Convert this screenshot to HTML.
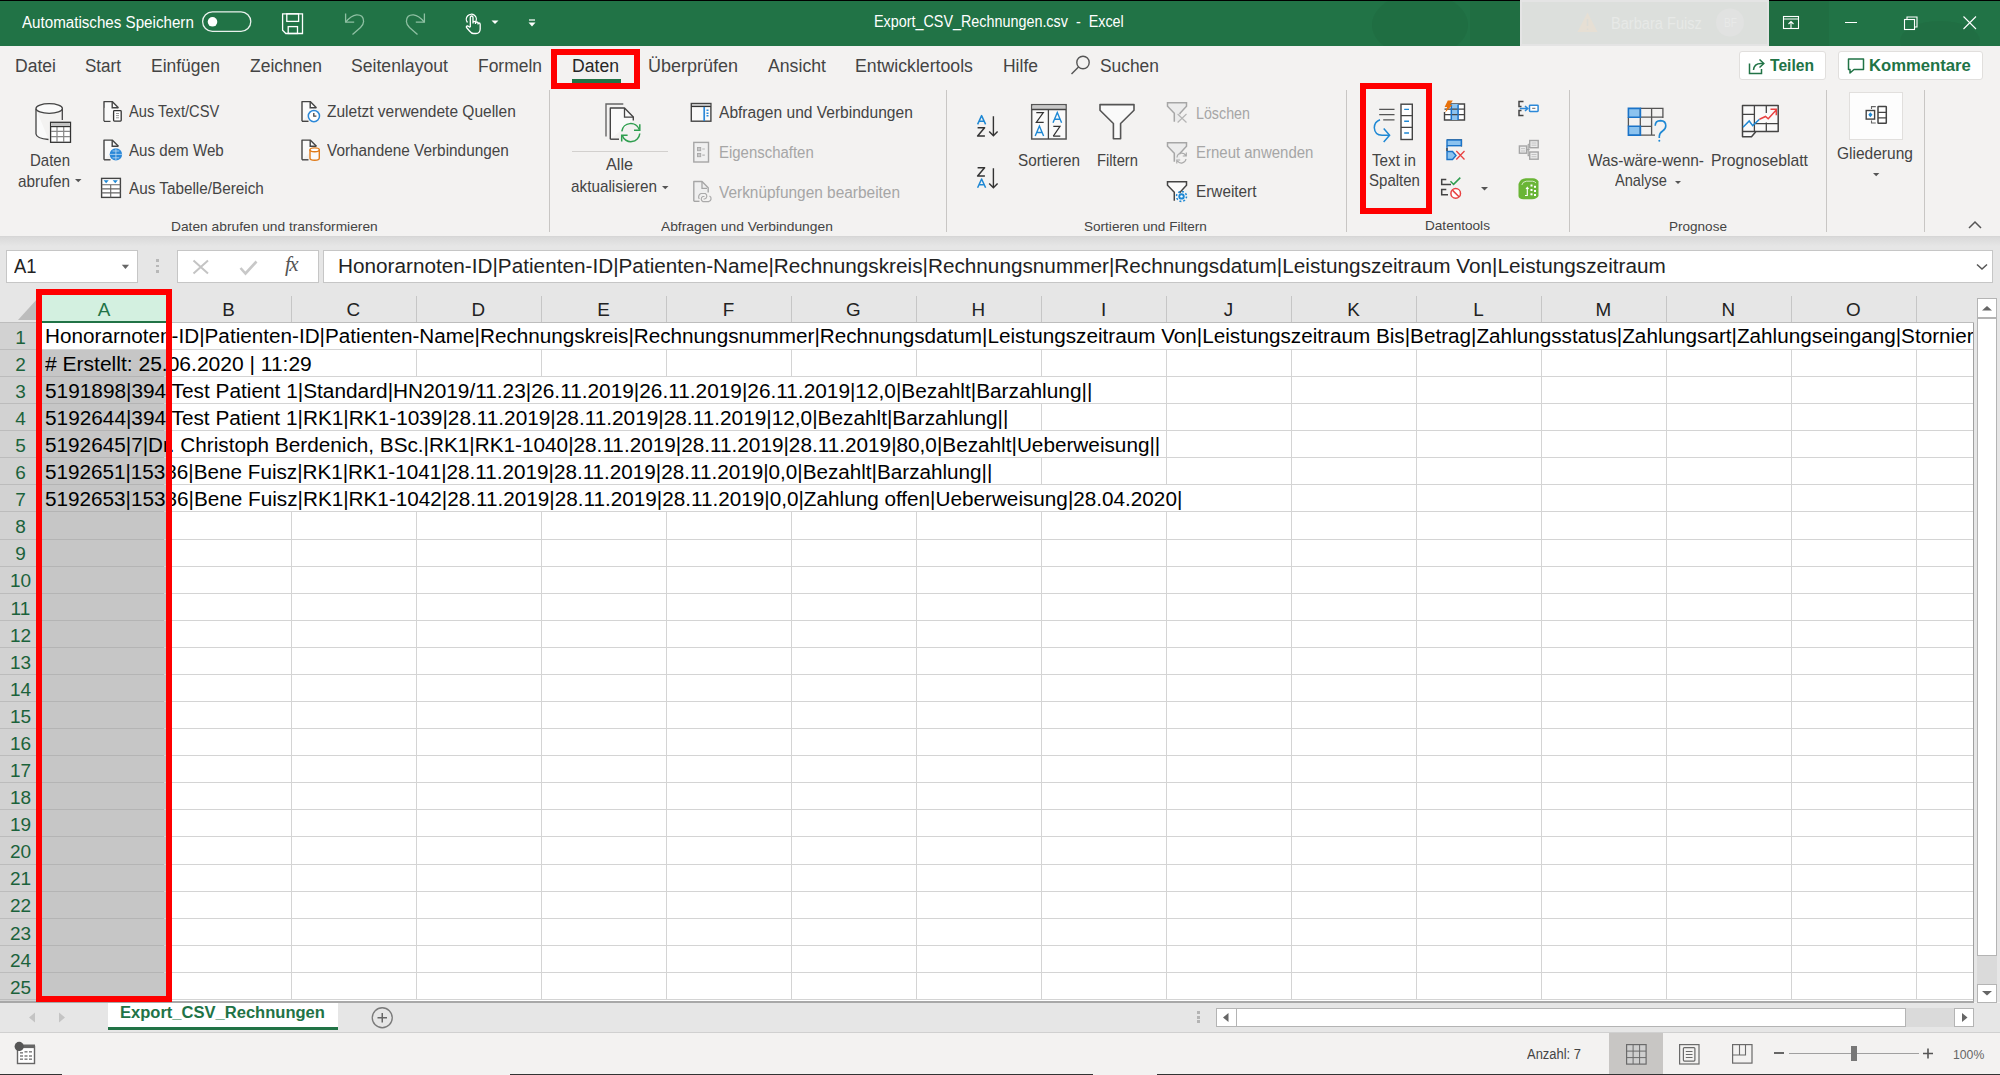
<!DOCTYPE html><html><head><meta charset="utf-8"><style>
html,body{margin:0;padding:0;width:2000px;height:1075px;overflow:hidden;background:#f3f2f1;font-family:"Liberation Sans",sans-serif}
.t{position:absolute;white-space:pre;}
</style></head><body>
<div style="position:absolute;left:0px;top:0px;width:2000px;height:1px;background:#000"></div>
<div style="position:absolute;left:0px;top:1px;width:2000px;height:45px;background:#217346"></div>
<div class="t" style="left:22px;top:14.76px;font-size:15.642px;line-height:15.642px;color:#fff;transform:scaleX(0.9697);transform-origin:0 13.24px;">Automatisches Speichern</div>
<div class="t" style="left:874px;top:14.26px;font-size:15.642px;line-height:15.642px;color:#fff;transform:scaleX(0.9187);transform-origin:0 13.24px;">Export_CSV_Rechnungen.csv  -  Excel</div>
<div style="position:absolute;left:0px;top:46px;width:2000px;height:190px;background:#f3f2f1"></div>
<div class="t" style="left:15px;top:56.63px;font-size:18.156px;line-height:18.156px;color:#444;transform:scaleX(0.9673);transform-origin:0 15.37px;">Datei</div>
<div class="t" style="left:85px;top:56.63px;font-size:18.156px;line-height:18.156px;color:#444;transform:scaleX(0.9389);transform-origin:0 15.37px;">Start</div>
<div class="t" style="left:151px;top:56.63px;font-size:18.156px;line-height:18.156px;color:#444;transform:scaleX(0.9627);transform-origin:0 15.37px;">Einfügen</div>
<div class="t" style="left:250px;top:56.63px;font-size:18.156px;line-height:18.156px;color:#444;transform:scaleX(0.9640);transform-origin:0 15.37px;">Zeichnen</div>
<div class="t" style="left:351px;top:56.63px;font-size:18.156px;line-height:18.156px;color:#444;transform:scaleX(0.9707);transform-origin:0 15.37px;">Seitenlayout</div>
<div class="t" style="left:478px;top:56.63px;font-size:18.156px;line-height:18.156px;color:#444;transform:scaleX(0.9612);transform-origin:0 15.37px;">Formeln</div>
<div class="t" style="left:572px;top:56.63px;font-size:18.156px;line-height:18.156px;color:#262626;transform:scaleX(0.9701);transform-origin:0 15.37px;">Daten</div>
<div class="t" style="left:648px;top:56.63px;font-size:18.156px;line-height:18.156px;color:#444;transform:scaleX(0.9909);transform-origin:0 15.37px;">Überprüfen</div>
<div class="t" style="left:768px;top:56.63px;font-size:18.156px;line-height:18.156px;color:#444;transform:scaleX(0.9742);transform-origin:0 15.37px;">Ansicht</div>
<div class="t" style="left:855px;top:56.63px;font-size:18.156px;line-height:18.156px;color:#444;transform:scaleX(0.9746);transform-origin:0 15.37px;">Entwicklertools</div>
<div class="t" style="left:1003px;top:56.63px;font-size:18.156px;line-height:18.156px;color:#444;transform:scaleX(0.9636);transform-origin:0 15.37px;">Hilfe</div>
<div class="t" style="left:1100px;top:56.63px;font-size:18.156px;line-height:18.156px;color:#444;transform:scaleX(0.9582);transform-origin:0 15.37px;">Suchen</div>
<div style="position:absolute;left:572px;top:79px;width:49px;height:4px;background:#217346"></div>
<div class="t" style="left:30px;top:151.99px;font-size:16.201px;line-height:16.201px;color:#444;transform:scaleX(0.9253);transform-origin:0 13.71px;">Daten</div>
<div class="t" style="left:18px;top:172.69px;font-size:16.201px;line-height:16.201px;color:#444;transform:scaleX(0.9465);transform-origin:0 13.71px;">abrufen</div>
<div class="t" style="left:129.4px;top:104.34px;font-size:15.782px;line-height:15.782px;color:#444;transform:scaleX(0.9302);transform-origin:0 13.36px;">Aus Text/CSV</div>
<div class="t" style="left:129.4px;top:142.84px;font-size:15.782px;line-height:15.782px;color:#444;transform:scaleX(0.9593);transform-origin:0 13.36px;">Aus dem Web</div>
<div class="t" style="left:129.4px;top:181.04px;font-size:15.782px;line-height:15.782px;color:#444;transform:scaleX(0.9699);transform-origin:0 13.36px;">Aus Tabelle/Bereich</div>
<div class="t" style="left:327px;top:104.34px;font-size:15.782px;line-height:15.782px;color:#444;transform:scaleX(0.9838);transform-origin:0 13.36px;">Zuletzt verwendete Quellen</div>
<div class="t" style="left:327px;top:142.84px;font-size:15.782px;line-height:15.782px;color:#444;transform:scaleX(0.9737);transform-origin:0 13.36px;">Vorhandene Verbindungen</div>
<div class="t" style="left:171px;top:219.65px;font-size:13.408px;line-height:13.408px;color:#444;transform:scaleX(1.0287);transform-origin:0 11.35px;">Daten abrufen und transformieren</div>
<div class="t" style="left:606px;top:156.29px;font-size:16.201px;line-height:16.201px;color:#444;">Alle</div>
<div class="t" style="left:571px;top:178.29px;font-size:16.201px;line-height:16.201px;color:#444;transform:scaleX(0.9456);transform-origin:0 13.71px;">aktualisieren</div>
<div class="t" style="left:719.4px;top:105.36px;font-size:15.642px;line-height:15.642px;color:#444;transform:scaleX(0.9958);transform-origin:0 13.24px;">Abfragen und Verbindungen</div>
<div class="t" style="left:719.4px;top:144.76px;font-size:15.642px;line-height:15.642px;color:#a6a6a6;transform:scaleX(0.9563);transform-origin:0 13.24px;">Eigenschaften</div>
<div class="t" style="left:719.4px;top:184.76px;font-size:15.642px;line-height:15.642px;color:#a6a6a6;transform:scaleX(0.9875);transform-origin:0 13.24px;">Verknüpfungen bearbeiten</div>
<div class="t" style="left:661px;top:219.65px;font-size:13.408px;line-height:13.408px;color:#444;transform:scaleX(1.0301);transform-origin:0 11.35px;">Abfragen und Verbindungen</div>
<div class="t" style="left:1018px;top:151.79px;font-size:16.201px;line-height:16.201px;color:#444;transform:scaleX(0.9432);transform-origin:0 13.71px;">Sortieren</div>
<div class="t" style="left:1097px;top:151.79px;font-size:16.201px;line-height:16.201px;color:#444;transform:scaleX(0.9109);transform-origin:0 13.71px;">Filtern</div>
<div class="t" style="left:1195.5px;top:105.76px;font-size:15.642px;line-height:15.642px;color:#a6a6a6;transform:scaleX(0.9132);transform-origin:0 13.24px;">Löschen</div>
<div class="t" style="left:1195.5px;top:145.26px;font-size:15.642px;line-height:15.642px;color:#a6a6a6;transform:scaleX(0.9583);transform-origin:0 13.24px;">Erneut anwenden</div>
<div class="t" style="left:1195.5px;top:184.46px;font-size:15.642px;line-height:15.642px;color:#444;transform:scaleX(0.9804);transform-origin:0 13.24px;">Erweitert</div>
<div class="t" style="left:1084px;top:219.65px;font-size:13.408px;line-height:13.408px;color:#444;transform:scaleX(1.0126);transform-origin:0 11.35px;">Sortieren und Filtern</div>
<div class="t" style="left:1372px;top:151.89px;font-size:16.201px;line-height:16.201px;color:#444;transform:scaleX(0.9397);transform-origin:0 13.71px;">Text in</div>
<div class="t" style="left:1369px;top:172.29px;font-size:16.201px;line-height:16.201px;color:#444;transform:scaleX(0.9282);transform-origin:0 13.71px;">Spalten</div>
<div class="t" style="left:1425px;top:219.15px;font-size:13.408px;line-height:13.408px;color:#444;transform:scaleX(1.0141);transform-origin:0 11.35px;">Datentools</div>
<div class="t" style="left:1588px;top:152.29px;font-size:16.201px;line-height:16.201px;color:#444;transform:scaleX(0.9522);transform-origin:0 13.71px;">Was-wäre-wenn-</div>
<div class="t" style="left:1615px;top:172.29px;font-size:16.201px;line-height:16.201px;color:#444;transform:scaleX(0.9022);transform-origin:0 13.71px;">Analyse</div>
<div class="t" style="left:1711px;top:152.29px;font-size:16.201px;line-height:16.201px;color:#444;transform:scaleX(0.9703);transform-origin:0 13.71px;">Prognoseblatt</div>
<div class="t" style="left:1669px;top:219.65px;font-size:13.408px;line-height:13.408px;color:#444;transform:scaleX(1.0106);transform-origin:0 11.35px;">Prognose</div>
<div class="t" style="left:1837px;top:145.29px;font-size:16.201px;line-height:16.201px;color:#444;transform:scaleX(0.9590);transform-origin:0 13.71px;">Gliederung</div>
<div style="position:absolute;left:1739px;top:51px;width:87px;height:29px;background:#fff;border:1px solid #e1dfdd;border-radius:3px;box-sizing:border-box"></div>
<div style="position:absolute;left:1838px;top:51px;width:145px;height:29px;background:#fff;border:1px solid #e1dfdd;border-radius:3px;box-sizing:border-box"></div>
<div class="t" style="left:1770px;top:57.46px;font-size:17.179px;line-height:17.179px;color:#217346;font-weight:bold;transform:scaleX(0.9098);transform-origin:0 14.54px;">Teilen</div>
<div class="t" style="left:1869px;top:57.46px;font-size:17.179px;line-height:17.179px;color:#217346;font-weight:bold;transform:scaleX(0.9714);transform-origin:0 14.54px;">Kommentare</div>
<div style="position:absolute;left:549px;top:90px;width:1px;height:142px;background:#c8c6c4"></div>
<div style="position:absolute;left:946px;top:90px;width:1px;height:142px;background:#c8c6c4"></div>
<div style="position:absolute;left:1346px;top:90px;width:1px;height:142px;background:#c8c6c4"></div>
<div style="position:absolute;left:1569px;top:90px;width:1px;height:142px;background:#c8c6c4"></div>
<div style="position:absolute;left:1826px;top:90px;width:1px;height:142px;background:#c8c6c4"></div>
<div style="position:absolute;left:1924px;top:90px;width:1px;height:142px;background:#c8c6c4"></div>
<div style="position:absolute;left:572px;top:151px;width:96px;height:1px;background:#d2d0ce"></div>
<div style="position:absolute;left:1849px;top:92px;width:54px;height:48px;background:#fdfdfd;border:1px solid #e1dfdd;box-sizing:border-box"></div>
<svg style="position:absolute;left:30px;top:98px" width="50" height="50" viewBox="0 0 50 50"><g fill="#fafafa" stroke="#444" stroke-width="1.3">
<path d="M6 10.7V36Q6.5 40.5 18.5 41.5"/>
<path d="M32.3 10.7V22" fill="none"/>
<ellipse cx="19.2" cy="10.5" rx="13.2" ry="4.8"/></g>
<rect x="20.6" y="24.3" width="19.9" height="20" fill="#fff" stroke="#333" stroke-width="1.3"/>
<rect x="21.3" y="25" width="18.5" height="3.5" fill="#c3c3c3"/>
<g stroke="#888" stroke-width="1.2"><path d="M27 28.5V44M33.7 28.5V44M21 33.3H40M21 38.6H40"/></g>
<path d="M21 28.6H40" stroke="#333" stroke-width="1.2"/></svg>
<svg style="position:absolute;left:98px;top:98px" width="30" height="30" viewBox="0 0 30 30"><path d="M6 23.3V3.6H14.2L20.4 9.8" fill="#fafafa" stroke="#444" stroke-width="1.4" stroke-linejoin="round"/><path d="M14.2 3.6V9.8H20.4" fill="none" stroke="#444" stroke-width="1.4"/><path d="M6 23.3H12.5" stroke="#444" stroke-width="1.4"/><path d="M6.7 9.8V22.6H15" fill="#fafafa" stroke="none"/><rect x="15.6" y="12.6" width="7.6" height="10.5" rx="0.8" fill="#fff" stroke="#333" stroke-width="1.3"/><path d="M18 15.5H21M18 17.6H21M18 19.8H21" stroke="#999" stroke-width="1"/></svg>
<svg style="position:absolute;left:98px;top:136px" width="30" height="30" viewBox="0 0 30 30"><path d="M6 23.8V4.1H14.2L20.4 10.3" fill="#fafafa" stroke="#444" stroke-width="1.4" stroke-linejoin="round"/><path d="M14.2 4.1V10.3H20.4" fill="none" stroke="#444" stroke-width="1.4"/><path d="M6 23.8H12.5" stroke="#444" stroke-width="1.4"/><circle cx="17.9" cy="18.4" r="6.2" fill="#2b88d8"/><path d="M12 18.4H24M17.9 12.5V24.3M14.5 15H21.3M14.5 21.8H21.3" stroke="#fff" stroke-width="0.8" opacity="0.7"/></svg>
<svg style="position:absolute;left:98px;top:174px" width="30" height="30" viewBox="0 0 30 30"><rect x="3.6" y="4.4" width="18.8" height="19" fill="#fff" stroke="#444" stroke-width="1.4"/><path d="M5.6 6.3H10.7L8.15 9.2ZM14.7 6.3H19.8L17.25 9.2Z" fill="#1e88d4"/><path d="M3.6 10.8H22.4M3.6 14.9H22.4M3.6 18.9H22.4M12.7 10.8V23.4" stroke="#666" stroke-width="1.1"/></svg>
<svg style="position:absolute;left:296px;top:98px" width="30" height="30" viewBox="0 0 30 30"><path d="M6 23.3V3.6H14.2L20.4 9.8" fill="#fafafa" stroke="#444" stroke-width="1.4" stroke-linejoin="round"/><path d="M14.2 3.6V9.8H20.4" fill="none" stroke="#444" stroke-width="1.4"/><path d="M6 23.3H12.5" stroke="#444" stroke-width="1.4"/><circle cx="17.9" cy="18.1" r="5.6" fill="#fff" stroke="#2b88d8" stroke-width="1.5"/><path d="M17.8 15V18.1H20.4" fill="none" stroke="#444" stroke-width="1.3"/></svg>
<svg style="position:absolute;left:296px;top:136px" width="30" height="30" viewBox="0 0 30 30"><path d="M6 23.8V4.1H14.2L20.4 10.3" fill="#fafafa" stroke="#444" stroke-width="1.4" stroke-linejoin="round"/><path d="M14.2 4.1V10.3H20.4" fill="none" stroke="#444" stroke-width="1.4"/><path d="M6 23.8H12.5" stroke="#444" stroke-width="1.4"/><path d="M14 13.5V22.2Q14 24.2 18.7 24.2Q23.3 24.2 23.3 22.2V13.5" fill="#fafafa" stroke="#e07b1a" stroke-width="1.4"/><ellipse cx="18.65" cy="13.8" rx="4.65" ry="1.9" fill="#fff" stroke="#e07b1a" stroke-width="1.4"/></svg>
<svg style="position:absolute;left:598px;top:98px" width="50" height="50" viewBox="0 0 50 50"><path d="M8 38.6V6H25.3" fill="none" stroke="#666" stroke-width="1.4"/>
<path d="M12.3 41.2V10H26.5L35.3 19V22.6" fill="#fafafa" stroke="#444" stroke-width="1.4" stroke-linejoin="round"/>
<path d="M26.5 10V19.2H35.3" fill="none" stroke="#444" stroke-width="1.3"/>
<path d="M12.3 41.2H21" stroke="#444" stroke-width="1.4"/>
<path d="M23.8 33.3A9 9 0 0 1 41.2 31.6" fill="none" stroke="#2f9e4f" stroke-width="1.5"/>
<path d="M41.8 26.3V32.2H36" fill="none" stroke="#2f9e4f" stroke-width="1.5"/>
<path d="M41.8 35.5A9 9 0 0 1 24.3 37.5" fill="none" stroke="#2f9e4f" stroke-width="1.5"/>
<path d="M23.7 43.5V37.3H29.6" fill="none" stroke="#2f9e4f" stroke-width="1.5"/></svg>
<svg style="position:absolute;left:685px;top:98px" width="30" height="30" viewBox="0 0 30 30"><rect x="6.3" y="5.5" width="19.6" height="17.7" fill="#fafafa" stroke="#444" stroke-width="1.4"/><rect x="7" y="6.2" width="18.2" height="2.4" fill="#c4c4c4"/><path d="M6.3 8.5H25.9" stroke="#333" stroke-width="1.2"/><path d="M19.2 8.9V23" stroke="#2b88d8" stroke-width="1.7"/><path d="M21.5 12.3H23.5M21.5 15.3H23.5M21.5 17.8H23.5" stroke="#2b88d8" stroke-width="1.4"/></svg>
<svg style="position:absolute;left:688px;top:138px" width="30" height="30" viewBox="0 0 30 30"><rect x="5.8" y="4.4" width="14.7" height="19.6" fill="#f0f0f0" stroke="#a6a6a6" stroke-width="1.4"/><rect x="9.5" y="9.5" width="3.2" height="3.2" fill="#c8c8c8" stroke="#a8a8a8" stroke-width="0.9"/><rect x="9.5" y="15.5" width="3.2" height="3.2" fill="#c8c8c8" stroke="#a8a8a8" stroke-width="0.9"/><path d="M14.3 11H16.8M14.3 17.2H16.8" stroke="#b5b5b5" stroke-width="1.2"/></svg>
<svg style="position:absolute;left:688px;top:176px" width="30" height="30" viewBox="0 0 30 30"><path d="M5.8 25.3V5.5H14L20.2 11.8V16.5" fill="#efefef" stroke="#a6a6a6" stroke-width="1.4" stroke-linejoin="round"/><path d="M14 5.5V12.3H19" fill="none" stroke="#a6a6a6" stroke-width="1.3"/><path d="M5.8 25.3H11.5" stroke="#a6a6a6" stroke-width="1.4"/><path d="M11.3 23A3.6 3.6 0 0 1 13 17.5H17.3A3 3 0 0 1 16.6 23H15.5M16.5 20.5H14.8A2.8 2.8 0 0 0 15 25.6H20.6A3 3 0 0 0 21.5 20" fill="none" stroke="#aaa" stroke-width="1.2"/></svg>
<svg style="position:absolute;left:74px;top:178px" width="8.5" height="5.25" viewBox="0 0 8.5 5.25"><path d="M1 1H7.5L4.25 4.25Z" fill="#555"/></svg>
<svg style="position:absolute;left:660.5px;top:185px" width="8.5" height="5.25" viewBox="0 0 8.5 5.25"><path d="M1 1H7.5L4.25 4.25Z" fill="#555"/></svg>
<svg style="position:absolute;left:1673.5px;top:180px" width="8.0" height="5.0" viewBox="0 0 8.0 5.0"><path d="M1 1H7.0L4.0 4.0Z" fill="#555"/></svg>
<svg style="position:absolute;left:1871.8px;top:172px" width="8.400000000000091" height="5.2000000000000455" viewBox="0 0 8.400000000000091 5.2000000000000455"><path d="M1 1H7.400000000000091L4.2000000000000455 4.2000000000000455Z" fill="#555"/></svg>
<svg style="position:absolute;left:1480px;top:186.2px" width="9" height="5.5" viewBox="0 0 9 5.5"><path d="M1 1H8L4.5 4.5Z" fill="#555"/></svg>
<svg style="position:absolute;left:970px;top:110px" width="35" height="35" viewBox="0 0 35 35"><path d="M7.6 14.4L11.6 5.6L15.6 14.4M9 11.3H14.2" fill="none" stroke="#1e88d4" stroke-width="1.5" stroke-linejoin="round"/><path d="M7.6 17.7H14.6L7.6 25.9H14.9" fill="none" stroke="#333" stroke-width="1.5" stroke-linejoin="round"/><path d="M23.4 6.2V25.6M19.2 21.4L23.4 25.8L27.6 21.4" fill="none" stroke="#333" stroke-width="1.4"/></svg>
<svg style="position:absolute;left:970px;top:162px" width="35" height="35" viewBox="0 0 35 35"><path d="M7.6 5.7H14.6L7.6 13.9H14.9" fill="none" stroke="#333" stroke-width="1.5" stroke-linejoin="round"/><path d="M7.6 25.8L11.6 17L15.6 25.8M9 22.7H14.2" fill="none" stroke="#1e88d4" stroke-width="1.5" stroke-linejoin="round"/><path d="M23.4 6.2V25.6M19.2 21.4L23.4 25.8L27.6 21.4" fill="none" stroke="#333" stroke-width="1.4"/></svg>
<svg style="position:absolute;left:1025px;top:98px" width="50" height="50" viewBox="0 0 50 50"><rect x="6.7" y="6.7" width="34.4" height="34.3" fill="#fafafa" stroke="#555" stroke-width="1.5"/>
<rect x="7.5" y="7.4" width="32.8" height="3.8" fill="#c8c8c8"/><path d="M6.7 11.5H41.1M23.4 11.5V41" stroke="#444" stroke-width="1.3"/>
<path d="M11.3 14.7H18.3L11.3 24.4H18.7M28.3 38.1H35.3" fill="none" stroke="#333" stroke-width="1.2"/>
<path d="M28.3 28.3H35L28.3 38.1" fill="none" stroke="#333" stroke-width="1.2"/>
<path d="M10.2 38.1L14.4 28L18.6 38.1M11.6 34.5H17.2M28 24.8L32.3 14.6L36.6 24.8M29.4 21.2H35.2" fill="none" stroke="#1e88d4" stroke-width="1.4"/></svg>
<svg style="position:absolute;left:1094px;top:98px" width="50" height="50" viewBox="0 0 50 50"><path d="M6 6.6H40V12.2L26.6 25.5V40.8H19.4V25.5L6 12.2Z" fill="#fafafa" stroke="#555" stroke-width="1.6" stroke-linejoin="round"/></svg>
<svg style="position:absolute;left:1166px;top:101px" width="24" height="24" viewBox="0 0 24 24"><path d="M1.5 1.8H20.5V5.3L14.0 12.3V20.3H8.3V12.3L1.5 5.3Z" fill="#ececec" stroke="none"/><path d="M14.0 13.3V12.3L20.5 5.3V1.8H1.5V5.3L8.3 12.3V20.8" fill="none" stroke="#a6a6a6" stroke-width="1.5" stroke-linejoin="miter"/><path d="M11.6 13L20.5 21.5M20.5 13L11.6 21.5" stroke="#b5b5b5" stroke-width="1.2"/></svg>
<svg style="position:absolute;left:1166px;top:141px" width="24" height="24" viewBox="0 0 24 24"><path d="M1.5 1.8H20.5V5.3L14.0 12.3V20.3H8.3V12.3L1.5 5.3Z" fill="#ececec" stroke="none"/><path d="M14.0 13.3V12.3L20.5 5.3V1.8H1.5V5.3L8.3 12.3V20.8" fill="none" stroke="#a6a6a6" stroke-width="1.5" stroke-linejoin="miter"/><path d="M11 16.5A4.7 4.7 0 0 1 19.8 14.6M20.3 11.5V15H16.8M20 18A4.7 4.7 0 0 1 11.5 20M10.8 22.5V19H14.2" fill="none" stroke="#aaa" stroke-width="1.2"/></svg>
<svg style="position:absolute;left:1166px;top:180px" width="24" height="24" viewBox="0 0 24 24"><path d="M1.5 1.8H20.5V5.3L14.0 12.3V20.3H8.3V12.3L1.5 5.3Z" fill="#fafafa" stroke="none"/><path d="M14.0 13.3V12.3L20.5 5.3V1.8H1.5V5.3L8.3 12.3V20.8" fill="none" stroke="#444" stroke-width="1.5" stroke-linejoin="miter"/><circle cx="15.5" cy="16.4" r="3.2" fill="#1e88d4"/><circle cx="15.5" cy="16.4" r="5" fill="none" stroke="#1e88d4" stroke-width="1.5" stroke-dasharray="2 1.9"/><circle cx="15.5" cy="16.4" r="1.2" fill="#fff"/></svg>
<svg style="position:absolute;left:1368px;top:98px" width="50" height="50" viewBox="0 0 50 50"><path d="M11.2 11.4H26.5M11.2 16.6H26.5M15.2 21.9H26.5" stroke="#555" stroke-width="1.4"/>
<rect x="33" y="6.2" width="11.3" height="35.3" fill="#fff" stroke="#444" stroke-width="1.4"/>
<path d="M33 17.7H44.3M33 29.4H44.3" stroke="#444" stroke-width="1.3"/>
<path d="M36.2 11.4H41M36.2 23.2H41M36.2 35H41" stroke="#1e88d4" stroke-width="1.4"/>
<path d="M12 21.8Q6.3 24 6.3 29.8Q6.8 37.2 14 37.3H21" fill="none" stroke="#1e88d4" stroke-width="1.5"/>
<path d="M15.7 30.6L21.6 37.3L15.7 44" fill="none" stroke="#1e88d4" stroke-width="1.5"/></svg>
<svg style="position:absolute;left:1440px;top:98px" width="30" height="28" viewBox="0 0 30 28"><path d="M9 6H24.5V22H4.5V14" fill="#fff" stroke="#444" stroke-width="1.4"/><rect x="11.3" y="6" width="6.8" height="16" fill="#8cc3ef"/><path d="M4.5 11.2H24.5M4.5 16.6H24.5" stroke="#444" stroke-width="1.3"/><path d="M11.3 6.5V22M18.1 6.5V22" stroke="#1a73c8" stroke-width="1.5"/><path d="M18.1 6V22" stroke="#444" stroke-width="0"/><path d="M7.8 2.6H12.8L9.9 7H12.4L5.2 14.6L7.1 9H4.6Z" fill="#e8720c"/></svg>
<svg style="position:absolute;left:1440px;top:136px" width="30" height="28" viewBox="0 0 30 28"><path d="M7 4H21.5V10.5" fill="none" stroke="#444" stroke-width="1.3"/><rect x="7" y="4" width="14.3" height="5.7" fill="#8cc3ef" stroke="#1a73c8" stroke-width="1.4"/><path d="M7 9.7V23.5H12.5L16 19.5L12.5 15.5H7" fill="#8cc3ef" stroke="#1a73c8" stroke-width="1.4"/><path d="M7 12V15" stroke="#444" stroke-width="1.3"/><path d="M16.3 15L24.5 23.5M24.5 15L16.3 23.5" stroke="#e84141" stroke-width="1.3"/></svg>
<svg style="position:absolute;left:1436px;top:175px" width="30" height="28" viewBox="0 0 30 28"><path d="M10.3 4.6H5.7V9.6H15M10.3 14.6H5.7V19.8H12" fill="none" stroke="#444" stroke-width="1.5"/><path d="M14.5 6.2L17.6 9.4L24.3 2.6" fill="none" stroke="#2f9e4f" stroke-width="1.5"/><circle cx="19.7" cy="18.4" r="4.8" fill="#fff" stroke="#e84141" stroke-width="1.5"/><path d="M16.4 15.1L23 21.7" stroke="#e84141" stroke-width="1.5"/></svg>
<svg style="position:absolute;left:1514px;top:98px" width="30" height="26" viewBox="0 0 30 26"><path d="M9.5 3.5H5V8.5H7.5M7.5 12.5H5V17.5H9.5" fill="none" stroke="#444" stroke-width="1.5"/><path d="M5.8 10.5H13.5M11 8L13.8 10.5L11 13" fill="none" stroke="#2b88d8" stroke-width="1.5"/><rect x="15.5" y="7.2" width="8.6" height="6.2" rx="0.6" fill="#fff" stroke="#2b88d8" stroke-width="1.5"/><path d="M18.2 10.3H21.4" stroke="#666" stroke-width="1"/></svg>
<svg style="position:absolute;left:1514px;top:136px" width="30" height="28" viewBox="0 0 30 28"><g fill="#ececec" stroke="#a6a6a6" stroke-width="1.4"><rect x="5.4" y="10" width="7.2" height="7.2"/><rect x="15.7" y="4.5" width="8.5" height="7.2"/><rect x="15.7" y="16" width="8.5" height="7.2"/></g><path d="M12.6 13.6H15.7M14.2 8.3V19.6H15.7M14.2 8.3H15.7" fill="none" stroke="#a6a6a6" stroke-width="1.2"/><path d="M7 12.6H11M7 15H11M17.5 7H22.5M17.5 9.2H22.5M17.5 18.5H22.5M17.5 20.7H22.5" stroke="#c0c0c0" stroke-width="0.9"/></svg>
<svg style="position:absolute;left:1514px;top:175px" width="30" height="28" viewBox="0 0 30 28"><path d="M4.5 9Q6 3.5 12 3.2H19Q23 3.6 24.5 6.5V21Q23 24 18 24.3H9.5Q4.5 24 4.5 21Z" fill="#6ab536"/><path d="M7.8 10Q8.5 6.5 12.5 6.2H18.5Q21 6.5 22 8" fill="none" stroke="#fff" stroke-width="0.9" opacity="0.8"/><path d="M11 20.5H13.3V12.5M12 14L13.3 12.3L14.6 14" fill="none" stroke="#fff" stroke-width="1.1"/><g fill="#fff"><rect x="16.5" y="9.5" width="2" height="2"/><rect x="20" y="10.8" width="2" height="2"/><rect x="16.5" y="14" width="2" height="2"/><rect x="20" y="15" width="2" height="2"/><rect x="16.5" y="18.3" width="2" height="2"/><rect x="20" y="19" width="2" height="2"/></g></svg>
<svg style="position:absolute;left:1620px;top:98px" width="50" height="50" viewBox="0 0 50 50"><rect x="8.4" y="10.4" width="12" height="8.8" fill="#8cc3ef"/><rect x="8.4" y="28.3" width="12" height="8.8" fill="#8cc3ef"/>
<path d="M20.3 10.4H42.9V20M20.3 19.2H42.9M20.3 28.3H31.6M20.3 37.1H35M31.6 10.4V37.1M20.3 10.4V37.1M8.4 19.2V28.3" fill="none" stroke="#555" stroke-width="1.3"/>
<path d="M20.4 10.4V19.3H8.4V10.4ZM20.4 28.3V37.1H8.4V28.3Z" fill="none" stroke="#1a73c8" stroke-width="1.6"/>
<rect x="8.4" y="10.4" width="0.1" height="0.1" fill="none"/>
<path d="M35.2 27.8Q35.2 22.6 40.5 22.6Q45.8 22.8 45.8 27.8Q45.8 31 42.6 33Q39.3 35.2 39.3 38.5V40" fill="none" stroke="#1e88d4" stroke-width="1.6"/><circle cx="39.3" cy="42.8" r="1" fill="#1e88d4"/></svg>
<svg style="position:absolute;left:1700px;top:98px" width="82" height="50" viewBox="0 0 82 50"><path d="M42.5 7.4H78.2V33.5H56L51.5 38.8H42.5Z" fill="#fafafa" stroke="#444" stroke-width="1.5" stroke-linejoin="round"/>
<path d="M54.4 7.4V33.5M66.3 7.4V15M66.3 24.5V33.5M42.5 16.4H54M55 25.6H78.2M42.5 33.5H56" fill="none" stroke="#444" stroke-width="1.3"/>
<path d="M43 29.3L49.2 23L52.7 27.6L59.5 21.2" fill="none" stroke="#1e88d4" stroke-width="1.5"/>
<path d="M59.5 21.2L65.5 18.5L68.2 20.8L76 12.3M70.5 11.2H76.3V17.3" fill="none" stroke="#e84141" stroke-width="1.5"/></svg>
<svg style="position:absolute;left:1845px;top:88px" width="60" height="50" viewBox="0 0 60 50"><rect x="21.2" y="22.5" width="8.4" height="8.6" fill="#fff" stroke="#444" stroke-width="1.4"/><path d="M25.4 24.3L27.5 26.8L25.4 29.3L23.3 26.8Z" fill="#1e88d4"/><path d="M30.8 18.6H26.5V21M26.5 32.5V35H30.8" fill="none" stroke="#666" stroke-width="1.1"/><rect x="33" y="18.6" width="8.3" height="16.6" rx="0.5" fill="#fff" stroke="#444" stroke-width="1.5"/><path d="M33 24.4H41.3M33 29.8H41.3" stroke="#444" stroke-width="1.2"/></svg>
<svg style="position:absolute;left:1966px;top:218px" width="18" height="14" viewBox="0 0 18 14"><path d="M3 10L9 4L15 10" fill="none" stroke="#555" stroke-width="1.5"/></svg>
<svg style="position:absolute;left:1066px;top:52px" width="28" height="28" viewBox="0 0 28 28"><circle cx="17" cy="10.5" r="6.2" fill="none" stroke="#555" stroke-width="1.4"/><path d="M12.5 15L5.5 22" stroke="#555" stroke-width="1.5"/></svg>
<svg style="position:absolute;left:1746px;top:55px" width="22" height="22" viewBox="0 0 22 22"><path d="M3.5 8.5V18.5H15.5V14" fill="none" stroke="#217346" stroke-width="1.5"/><path d="M7.5 15Q8 8.5 15 8.5H17" fill="none" stroke="#217346" stroke-width="1.5"/><path d="M13.5 4.5L17.8 8.5L13.5 12.5" fill="none" stroke="#217346" stroke-width="1.5"/></svg>
<svg style="position:absolute;left:1845px;top:55px" width="22" height="22" viewBox="0 0 22 22"><path d="M3.5 4H18.5V14.5H9L5 18V14.5H3.5Z" fill="none" stroke="#217346" stroke-width="1.5" stroke-linejoin="round"/></svg>
<div style="position:absolute;left:0px;top:236px;width:2000px;height:1px;background:#d6d6d6"></div>
<div style="position:absolute;left:0px;top:237px;width:2000px;height:86px;background:#e6e6e6"></div>
<div style="position:absolute;left:0px;top:237px;width:2000px;height:9px;background:linear-gradient(#d9d9d9,#e6e6e6)"></div>
<div style="position:absolute;left:6px;top:250px;width:132px;height:33px;background:#fff;border:1px solid #c6c6c6;box-sizing:border-box"></div>
<div class="t" style="left:14px;top:257.09px;font-size:19.972px;line-height:19.972px;color:#222;transform:scaleX(0.9211);transform-origin:0 16.91px;">A1</div>
<div style="position:absolute;left:177px;top:250px;width:142px;height:33px;background:#fff;border:1px solid #c6c6c6;box-sizing:border-box"></div>
<div style="position:absolute;left:323px;top:250px;width:1670px;height:33px;background:#fff;border:1px solid #c6c6c6;box-sizing:border-box"></div>
<div class="t" style="left:338px;top:257.21px;font-size:19.832px;line-height:19.832px;color:#222;transform:scaleX(1.0460);transform-origin:0 16.79px;">Honorarnoten-ID|Patienten-ID|Patienten-Name|Rechnungskreis|Rechnungsnummer|Rechnungsdatum|Leistungszeitraum Von|Leistungszeitraum</div>
<div style="position:absolute;left:0px;top:296px;width:1974px;height:26px;background:#e6e6e6"></div>
<div style="position:absolute;left:0px;top:322px;width:1974px;height:1px;background:#bdbdbd"></div>
<div style="position:absolute;left:41px;top:323px;width:1933px;height:679px;background:#fff"></div>
<div style="position:absolute;left:0px;top:323px;width:41px;height:679px;background:#d2d2d2"></div>
<div style="position:absolute;left:42px;top:350px;width:124px;height:650px;background:#c6c6c6"></div>
<div style="position:absolute;left:41px;top:349px;width:1933px;height:1px;background:#d4d4d4"></div>
<div style="position:absolute;left:0px;top:349px;width:41px;height:1px;background:#bcbcbc"></div>
<div style="position:absolute;left:41px;top:376px;width:1933px;height:1px;background:#d4d4d4"></div>
<div style="position:absolute;left:0px;top:376px;width:41px;height:1px;background:#bcbcbc"></div>
<div style="position:absolute;left:42px;top:376px;width:122px;height:1px;background:#b4b4b4"></div>
<div style="position:absolute;left:41px;top:403px;width:1933px;height:1px;background:#d4d4d4"></div>
<div style="position:absolute;left:0px;top:403px;width:41px;height:1px;background:#bcbcbc"></div>
<div style="position:absolute;left:42px;top:403px;width:122px;height:1px;background:#b4b4b4"></div>
<div style="position:absolute;left:41px;top:430px;width:1933px;height:1px;background:#d4d4d4"></div>
<div style="position:absolute;left:0px;top:430px;width:41px;height:1px;background:#bcbcbc"></div>
<div style="position:absolute;left:42px;top:430px;width:122px;height:1px;background:#b4b4b4"></div>
<div style="position:absolute;left:41px;top:457px;width:1933px;height:1px;background:#d4d4d4"></div>
<div style="position:absolute;left:0px;top:457px;width:41px;height:1px;background:#bcbcbc"></div>
<div style="position:absolute;left:42px;top:457px;width:122px;height:1px;background:#b4b4b4"></div>
<div style="position:absolute;left:41px;top:484px;width:1933px;height:1px;background:#d4d4d4"></div>
<div style="position:absolute;left:0px;top:484px;width:41px;height:1px;background:#bcbcbc"></div>
<div style="position:absolute;left:42px;top:484px;width:122px;height:1px;background:#b4b4b4"></div>
<div style="position:absolute;left:41px;top:511px;width:1933px;height:1px;background:#d4d4d4"></div>
<div style="position:absolute;left:0px;top:511px;width:41px;height:1px;background:#bcbcbc"></div>
<div style="position:absolute;left:42px;top:511px;width:122px;height:1px;background:#b4b4b4"></div>
<div style="position:absolute;left:41px;top:539px;width:1933px;height:1px;background:#d4d4d4"></div>
<div style="position:absolute;left:0px;top:539px;width:41px;height:1px;background:#bcbcbc"></div>
<div style="position:absolute;left:42px;top:539px;width:122px;height:1px;background:#b4b4b4"></div>
<div style="position:absolute;left:41px;top:566px;width:1933px;height:1px;background:#d4d4d4"></div>
<div style="position:absolute;left:0px;top:566px;width:41px;height:1px;background:#bcbcbc"></div>
<div style="position:absolute;left:42px;top:566px;width:122px;height:1px;background:#b4b4b4"></div>
<div style="position:absolute;left:41px;top:593px;width:1933px;height:1px;background:#d4d4d4"></div>
<div style="position:absolute;left:0px;top:593px;width:41px;height:1px;background:#bcbcbc"></div>
<div style="position:absolute;left:42px;top:593px;width:122px;height:1px;background:#b4b4b4"></div>
<div style="position:absolute;left:41px;top:620px;width:1933px;height:1px;background:#d4d4d4"></div>
<div style="position:absolute;left:0px;top:620px;width:41px;height:1px;background:#bcbcbc"></div>
<div style="position:absolute;left:42px;top:620px;width:122px;height:1px;background:#b4b4b4"></div>
<div style="position:absolute;left:41px;top:647px;width:1933px;height:1px;background:#d4d4d4"></div>
<div style="position:absolute;left:0px;top:647px;width:41px;height:1px;background:#bcbcbc"></div>
<div style="position:absolute;left:42px;top:647px;width:122px;height:1px;background:#b4b4b4"></div>
<div style="position:absolute;left:41px;top:674px;width:1933px;height:1px;background:#d4d4d4"></div>
<div style="position:absolute;left:0px;top:674px;width:41px;height:1px;background:#bcbcbc"></div>
<div style="position:absolute;left:42px;top:674px;width:122px;height:1px;background:#b4b4b4"></div>
<div style="position:absolute;left:41px;top:701px;width:1933px;height:1px;background:#d4d4d4"></div>
<div style="position:absolute;left:0px;top:701px;width:41px;height:1px;background:#bcbcbc"></div>
<div style="position:absolute;left:42px;top:701px;width:122px;height:1px;background:#b4b4b4"></div>
<div style="position:absolute;left:41px;top:728px;width:1933px;height:1px;background:#d4d4d4"></div>
<div style="position:absolute;left:0px;top:728px;width:41px;height:1px;background:#bcbcbc"></div>
<div style="position:absolute;left:42px;top:728px;width:122px;height:1px;background:#b4b4b4"></div>
<div style="position:absolute;left:41px;top:755px;width:1933px;height:1px;background:#d4d4d4"></div>
<div style="position:absolute;left:0px;top:755px;width:41px;height:1px;background:#bcbcbc"></div>
<div style="position:absolute;left:42px;top:755px;width:122px;height:1px;background:#b4b4b4"></div>
<div style="position:absolute;left:41px;top:782px;width:1933px;height:1px;background:#d4d4d4"></div>
<div style="position:absolute;left:0px;top:782px;width:41px;height:1px;background:#bcbcbc"></div>
<div style="position:absolute;left:42px;top:782px;width:122px;height:1px;background:#b4b4b4"></div>
<div style="position:absolute;left:41px;top:809px;width:1933px;height:1px;background:#d4d4d4"></div>
<div style="position:absolute;left:0px;top:809px;width:41px;height:1px;background:#bcbcbc"></div>
<div style="position:absolute;left:42px;top:809px;width:122px;height:1px;background:#b4b4b4"></div>
<div style="position:absolute;left:41px;top:836px;width:1933px;height:1px;background:#d4d4d4"></div>
<div style="position:absolute;left:0px;top:836px;width:41px;height:1px;background:#bcbcbc"></div>
<div style="position:absolute;left:42px;top:836px;width:122px;height:1px;background:#b4b4b4"></div>
<div style="position:absolute;left:41px;top:864px;width:1933px;height:1px;background:#d4d4d4"></div>
<div style="position:absolute;left:0px;top:864px;width:41px;height:1px;background:#bcbcbc"></div>
<div style="position:absolute;left:42px;top:864px;width:122px;height:1px;background:#b4b4b4"></div>
<div style="position:absolute;left:41px;top:891px;width:1933px;height:1px;background:#d4d4d4"></div>
<div style="position:absolute;left:0px;top:891px;width:41px;height:1px;background:#bcbcbc"></div>
<div style="position:absolute;left:42px;top:891px;width:122px;height:1px;background:#b4b4b4"></div>
<div style="position:absolute;left:41px;top:918px;width:1933px;height:1px;background:#d4d4d4"></div>
<div style="position:absolute;left:0px;top:918px;width:41px;height:1px;background:#bcbcbc"></div>
<div style="position:absolute;left:42px;top:918px;width:122px;height:1px;background:#b4b4b4"></div>
<div style="position:absolute;left:41px;top:945px;width:1933px;height:1px;background:#d4d4d4"></div>
<div style="position:absolute;left:0px;top:945px;width:41px;height:1px;background:#bcbcbc"></div>
<div style="position:absolute;left:42px;top:945px;width:122px;height:1px;background:#b4b4b4"></div>
<div style="position:absolute;left:41px;top:972px;width:1933px;height:1px;background:#d4d4d4"></div>
<div style="position:absolute;left:0px;top:972px;width:41px;height:1px;background:#bcbcbc"></div>
<div style="position:absolute;left:42px;top:972px;width:122px;height:1px;background:#b4b4b4"></div>
<div style="position:absolute;left:41px;top:999px;width:1933px;height:1px;background:#d4d4d4"></div>
<div style="position:absolute;left:0px;top:999px;width:41px;height:1px;background:#bcbcbc"></div>
<div style="position:absolute;left:42px;top:999px;width:122px;height:1px;background:#b4b4b4"></div>
<div style="position:absolute;left:166px;top:512px;width:1px;height:487px;background:#d4d4d4"></div>
<div style="position:absolute;left:166px;top:296px;width:1px;height:26px;background:#c6c6c6"></div>
<div style="position:absolute;left:291px;top:512px;width:1px;height:487px;background:#d4d4d4"></div>
<div style="position:absolute;left:291px;top:296px;width:1px;height:26px;background:#c6c6c6"></div>
<div style="position:absolute;left:416px;top:350px;width:1px;height:26px;background:#d4d4d4"></div>
<div style="position:absolute;left:416px;top:512px;width:1px;height:487px;background:#d4d4d4"></div>
<div style="position:absolute;left:416px;top:296px;width:1px;height:26px;background:#c6c6c6"></div>
<div style="position:absolute;left:541px;top:350px;width:1px;height:26px;background:#d4d4d4"></div>
<div style="position:absolute;left:541px;top:512px;width:1px;height:487px;background:#d4d4d4"></div>
<div style="position:absolute;left:541px;top:296px;width:1px;height:26px;background:#c6c6c6"></div>
<div style="position:absolute;left:666px;top:350px;width:1px;height:26px;background:#d4d4d4"></div>
<div style="position:absolute;left:666px;top:512px;width:1px;height:487px;background:#d4d4d4"></div>
<div style="position:absolute;left:666px;top:296px;width:1px;height:26px;background:#c6c6c6"></div>
<div style="position:absolute;left:791px;top:350px;width:1px;height:26px;background:#d4d4d4"></div>
<div style="position:absolute;left:791px;top:512px;width:1px;height:487px;background:#d4d4d4"></div>
<div style="position:absolute;left:791px;top:296px;width:1px;height:26px;background:#c6c6c6"></div>
<div style="position:absolute;left:916px;top:350px;width:1px;height:26px;background:#d4d4d4"></div>
<div style="position:absolute;left:916px;top:512px;width:1px;height:487px;background:#d4d4d4"></div>
<div style="position:absolute;left:916px;top:296px;width:1px;height:26px;background:#c6c6c6"></div>
<div style="position:absolute;left:1041px;top:350px;width:1px;height:26px;background:#d4d4d4"></div>
<div style="position:absolute;left:1041px;top:404px;width:1px;height:26px;background:#d4d4d4"></div>
<div style="position:absolute;left:1041px;top:458px;width:1px;height:26px;background:#d4d4d4"></div>
<div style="position:absolute;left:1041px;top:512px;width:1px;height:487px;background:#d4d4d4"></div>
<div style="position:absolute;left:1041px;top:296px;width:1px;height:26px;background:#c6c6c6"></div>
<div style="position:absolute;left:1166px;top:350px;width:1px;height:26px;background:#d4d4d4"></div>
<div style="position:absolute;left:1166px;top:377px;width:1px;height:26px;background:#d4d4d4"></div>
<div style="position:absolute;left:1166px;top:404px;width:1px;height:26px;background:#d4d4d4"></div>
<div style="position:absolute;left:1166px;top:431px;width:1px;height:26px;background:#d4d4d4"></div>
<div style="position:absolute;left:1166px;top:458px;width:1px;height:26px;background:#d4d4d4"></div>
<div style="position:absolute;left:1166px;top:512px;width:1px;height:487px;background:#d4d4d4"></div>
<div style="position:absolute;left:1166px;top:296px;width:1px;height:26px;background:#c6c6c6"></div>
<div style="position:absolute;left:1291px;top:350px;width:1px;height:26px;background:#d4d4d4"></div>
<div style="position:absolute;left:1291px;top:377px;width:1px;height:26px;background:#d4d4d4"></div>
<div style="position:absolute;left:1291px;top:404px;width:1px;height:26px;background:#d4d4d4"></div>
<div style="position:absolute;left:1291px;top:431px;width:1px;height:26px;background:#d4d4d4"></div>
<div style="position:absolute;left:1291px;top:458px;width:1px;height:26px;background:#d4d4d4"></div>
<div style="position:absolute;left:1291px;top:485px;width:1px;height:26px;background:#d4d4d4"></div>
<div style="position:absolute;left:1291px;top:512px;width:1px;height:487px;background:#d4d4d4"></div>
<div style="position:absolute;left:1291px;top:296px;width:1px;height:26px;background:#c6c6c6"></div>
<div style="position:absolute;left:1416px;top:350px;width:1px;height:26px;background:#d4d4d4"></div>
<div style="position:absolute;left:1416px;top:377px;width:1px;height:26px;background:#d4d4d4"></div>
<div style="position:absolute;left:1416px;top:404px;width:1px;height:26px;background:#d4d4d4"></div>
<div style="position:absolute;left:1416px;top:431px;width:1px;height:26px;background:#d4d4d4"></div>
<div style="position:absolute;left:1416px;top:458px;width:1px;height:26px;background:#d4d4d4"></div>
<div style="position:absolute;left:1416px;top:485px;width:1px;height:26px;background:#d4d4d4"></div>
<div style="position:absolute;left:1416px;top:512px;width:1px;height:487px;background:#d4d4d4"></div>
<div style="position:absolute;left:1416px;top:296px;width:1px;height:26px;background:#c6c6c6"></div>
<div style="position:absolute;left:1541px;top:350px;width:1px;height:26px;background:#d4d4d4"></div>
<div style="position:absolute;left:1541px;top:377px;width:1px;height:26px;background:#d4d4d4"></div>
<div style="position:absolute;left:1541px;top:404px;width:1px;height:26px;background:#d4d4d4"></div>
<div style="position:absolute;left:1541px;top:431px;width:1px;height:26px;background:#d4d4d4"></div>
<div style="position:absolute;left:1541px;top:458px;width:1px;height:26px;background:#d4d4d4"></div>
<div style="position:absolute;left:1541px;top:485px;width:1px;height:26px;background:#d4d4d4"></div>
<div style="position:absolute;left:1541px;top:512px;width:1px;height:487px;background:#d4d4d4"></div>
<div style="position:absolute;left:1541px;top:296px;width:1px;height:26px;background:#c6c6c6"></div>
<div style="position:absolute;left:1666px;top:350px;width:1px;height:26px;background:#d4d4d4"></div>
<div style="position:absolute;left:1666px;top:377px;width:1px;height:26px;background:#d4d4d4"></div>
<div style="position:absolute;left:1666px;top:404px;width:1px;height:26px;background:#d4d4d4"></div>
<div style="position:absolute;left:1666px;top:431px;width:1px;height:26px;background:#d4d4d4"></div>
<div style="position:absolute;left:1666px;top:458px;width:1px;height:26px;background:#d4d4d4"></div>
<div style="position:absolute;left:1666px;top:485px;width:1px;height:26px;background:#d4d4d4"></div>
<div style="position:absolute;left:1666px;top:512px;width:1px;height:487px;background:#d4d4d4"></div>
<div style="position:absolute;left:1666px;top:296px;width:1px;height:26px;background:#c6c6c6"></div>
<div style="position:absolute;left:1791px;top:350px;width:1px;height:26px;background:#d4d4d4"></div>
<div style="position:absolute;left:1791px;top:377px;width:1px;height:26px;background:#d4d4d4"></div>
<div style="position:absolute;left:1791px;top:404px;width:1px;height:26px;background:#d4d4d4"></div>
<div style="position:absolute;left:1791px;top:431px;width:1px;height:26px;background:#d4d4d4"></div>
<div style="position:absolute;left:1791px;top:458px;width:1px;height:26px;background:#d4d4d4"></div>
<div style="position:absolute;left:1791px;top:485px;width:1px;height:26px;background:#d4d4d4"></div>
<div style="position:absolute;left:1791px;top:512px;width:1px;height:487px;background:#d4d4d4"></div>
<div style="position:absolute;left:1791px;top:296px;width:1px;height:26px;background:#c6c6c6"></div>
<div style="position:absolute;left:1916px;top:350px;width:1px;height:26px;background:#d4d4d4"></div>
<div style="position:absolute;left:1916px;top:377px;width:1px;height:26px;background:#d4d4d4"></div>
<div style="position:absolute;left:1916px;top:404px;width:1px;height:26px;background:#d4d4d4"></div>
<div style="position:absolute;left:1916px;top:431px;width:1px;height:26px;background:#d4d4d4"></div>
<div style="position:absolute;left:1916px;top:458px;width:1px;height:26px;background:#d4d4d4"></div>
<div style="position:absolute;left:1916px;top:485px;width:1px;height:26px;background:#d4d4d4"></div>
<div style="position:absolute;left:1916px;top:512px;width:1px;height:487px;background:#d4d4d4"></div>
<div style="position:absolute;left:1916px;top:296px;width:1px;height:26px;background:#c6c6c6"></div>
<div style="position:absolute;left:41px;top:323px;width:1px;height:676px;background:#bcbcbc"></div>
<div class="t" style="left:97.2px;top:300.54px;font-size:18.855px;line-height:18.855px;color:#217346;">A</div>
<div class="t" style="left:222.2px;top:300.54px;font-size:18.855px;line-height:18.855px;color:#222;">B</div>
<div class="t" style="left:346.6px;top:300.54px;font-size:18.855px;line-height:18.855px;color:#222;">C</div>
<div class="t" style="left:471.6px;top:300.54px;font-size:18.855px;line-height:18.855px;color:#222;">D</div>
<div class="t" style="left:597.2px;top:300.54px;font-size:18.855px;line-height:18.855px;color:#222;">E</div>
<div class="t" style="left:722.7px;top:300.54px;font-size:18.855px;line-height:18.855px;color:#222;">F</div>
<div class="t" style="left:846.1px;top:300.54px;font-size:18.855px;line-height:18.855px;color:#222;">G</div>
<div class="t" style="left:971.6px;top:300.54px;font-size:18.855px;line-height:18.855px;color:#222;">H</div>
<div class="t" style="left:1100.9px;top:300.54px;font-size:18.855px;line-height:18.855px;color:#222;">I</div>
<div class="t" style="left:1223.8px;top:300.54px;font-size:18.855px;line-height:18.855px;color:#222;">J</div>
<div class="t" style="left:1347.2px;top:300.54px;font-size:18.855px;line-height:18.855px;color:#222;">K</div>
<div class="t" style="left:1473.2px;top:300.54px;font-size:18.855px;line-height:18.855px;color:#222;">L</div>
<div class="t" style="left:1595.6px;top:300.54px;font-size:18.855px;line-height:18.855px;color:#222;">M</div>
<div class="t" style="left:1721.6px;top:300.54px;font-size:18.855px;line-height:18.855px;color:#222;">N</div>
<div class="t" style="left:1846.1px;top:300.54px;font-size:18.855px;line-height:18.855px;color:#222;">O</div>
<div style="position:absolute;left:42px;top:295px;width:124px;height:26px;background:#d3f0e0"></div>
<div class="t" style="left:97.7px;top:300.54px;font-size:18.855px;line-height:18.855px;color:#217346;">A</div>
<div style="position:absolute;left:42px;top:321px;width:124px;height:2px;background:#217346"></div>
<svg style="position:absolute;left:18px;top:298px" width="20" height="22" viewBox="0 0 20 22"><polygon points="20,0 20,22 0,22" fill="#bcbcbc"/></svg>
<div class="t" style="left:15.2px;top:327.72px;font-size:18.994px;line-height:18.994px;color:#1b623b;">1</div>
<div class="t" style="left:15.2px;top:354.80px;font-size:18.994px;line-height:18.994px;color:#1b623b;">2</div>
<div class="t" style="left:15.2px;top:381.89px;font-size:18.994px;line-height:18.994px;color:#1b623b;">3</div>
<div class="t" style="left:15.2px;top:408.97px;font-size:18.994px;line-height:18.994px;color:#1b623b;">4</div>
<div class="t" style="left:15.2px;top:436.05px;font-size:18.994px;line-height:18.994px;color:#1b623b;">5</div>
<div class="t" style="left:15.2px;top:463.14px;font-size:18.994px;line-height:18.994px;color:#1b623b;">6</div>
<div class="t" style="left:15.2px;top:490.22px;font-size:18.994px;line-height:18.994px;color:#1b623b;">7</div>
<div class="t" style="left:15.2px;top:517.30px;font-size:18.994px;line-height:18.994px;color:#1b623b;">8</div>
<div class="t" style="left:15.2px;top:544.39px;font-size:18.994px;line-height:18.994px;color:#1b623b;">9</div>
<div class="t" style="left:9.9px;top:571.47px;font-size:18.994px;line-height:18.994px;color:#1b623b;">10</div>
<div class="t" style="left:10.6px;top:598.55px;font-size:18.994px;line-height:18.994px;color:#1b623b;">11</div>
<div class="t" style="left:9.9px;top:625.63px;font-size:18.994px;line-height:18.994px;color:#1b623b;">12</div>
<div class="t" style="left:9.9px;top:652.72px;font-size:18.994px;line-height:18.994px;color:#1b623b;">13</div>
<div class="t" style="left:9.9px;top:679.80px;font-size:18.994px;line-height:18.994px;color:#1b623b;">14</div>
<div class="t" style="left:9.9px;top:706.88px;font-size:18.994px;line-height:18.994px;color:#1b623b;">15</div>
<div class="t" style="left:9.9px;top:733.97px;font-size:18.994px;line-height:18.994px;color:#1b623b;">16</div>
<div class="t" style="left:9.9px;top:761.05px;font-size:18.994px;line-height:18.994px;color:#1b623b;">17</div>
<div class="t" style="left:9.9px;top:788.13px;font-size:18.994px;line-height:18.994px;color:#1b623b;">18</div>
<div class="t" style="left:9.9px;top:815.22px;font-size:18.994px;line-height:18.994px;color:#1b623b;">19</div>
<div class="t" style="left:9.9px;top:842.30px;font-size:18.994px;line-height:18.994px;color:#1b623b;">20</div>
<div class="t" style="left:9.9px;top:869.38px;font-size:18.994px;line-height:18.994px;color:#1b623b;">21</div>
<div class="t" style="left:9.9px;top:896.46px;font-size:18.994px;line-height:18.994px;color:#1b623b;">22</div>
<div class="t" style="left:9.9px;top:923.55px;font-size:18.994px;line-height:18.994px;color:#1b623b;">23</div>
<div class="t" style="left:9.9px;top:950.63px;font-size:18.994px;line-height:18.994px;color:#1b623b;">24</div>
<div class="t" style="left:9.9px;top:977.71px;font-size:18.994px;line-height:18.994px;color:#1b623b;">25</div>
<div style="position:absolute;left:0;top:0;width:1974px;height:1002px;overflow:hidden">
<div class="t" style="left:45px;top:326.42px;font-size:20.531px;line-height:20.531px;color:#000;transform:scaleX(1.0090);transform-origin:0 17.38px;">Honorarnoten-ID|Patienten-ID|Patienten-Name|Rechnungskreis|Rechnungsnummer|Rechnungsdatum|Leistungszeitraum Von|Leistungszeitraum Bis|Betrag|Zahlungsstatus|Zahlungsart|Zahlungseingang|Stornier</div>
<div class="t" style="left:45px;top:353.50px;font-size:20.531px;line-height:20.531px;color:#000;transform:scaleX(1.0245);transform-origin:0 17.38px;"># Erstellt: 25.06.2020 | 11:29</div>
<div class="t" style="left:45px;top:380.59px;font-size:20.531px;line-height:20.531px;color:#000;transform:scaleX(1.0148);transform-origin:0 17.38px;">5191898|394|Test Patient 1|Standard|HN2019/11.23|26.11.2019|26.11.2019|26.11.2019|12,0|Bezahlt|Barzahlung||</div>
<div class="t" style="left:45px;top:407.67px;font-size:20.531px;line-height:20.531px;color:#000;transform:scaleX(1.0138);transform-origin:0 17.38px;">5192644|394|Test Patient 1|RK1|RK1-1039|28.11.2019|28.11.2019|28.11.2019|12,0|Bezahlt|Barzahlung||</div>
<div class="t" style="left:45px;top:434.75px;font-size:20.531px;line-height:20.531px;color:#000;transform:scaleX(1.0111);transform-origin:0 17.38px;">5192645|7|Dr. Christoph Berdenich, BSc.|RK1|RK1-1040|28.11.2019|28.11.2019|28.11.2019|80,0|Bezahlt|Ueberweisung||</div>
<div class="t" style="left:45px;top:461.84px;font-size:20.531px;line-height:20.531px;color:#000;transform:scaleX(1.0078);transform-origin:0 17.38px;">5192651|15386|Bene Fuisz|RK1|RK1-1041|28.11.2019|28.11.2019|28.11.2019|0,0|Bezahlt|Barzahlung||</div>
<div class="t" style="left:45px;top:488.92px;font-size:20.531px;line-height:20.531px;color:#000;transform:scaleX(1.0094);transform-origin:0 17.38px;">5192653|15386|Bene Fuisz|RK1|RK1-1042|28.11.2019|28.11.2019|28.11.2019|0,0|Zahlung offen|Ueberweisung|28.04.2020|</div>
</div>
<div style="position:absolute;left:1973px;top:323px;width:1px;height:679px;background:#a0a0a0"></div>
<div style="position:absolute;left:0px;top:1001px;width:1974px;height:2px;background:#a8a8a8"></div>
<div style="position:absolute;left:551px;top:49px;width:89px;height:6px;background:#ff0000"></div>
<div style="position:absolute;left:551px;top:83px;width:89px;height:6px;background:#ff0000"></div>
<div style="position:absolute;left:551px;top:49px;width:6px;height:40px;background:#ff0000"></div>
<div style="position:absolute;left:634px;top:49px;width:6px;height:40px;background:#ff0000"></div>
<div style="position:absolute;left:1360px;top:83px;width:72px;height:6px;background:#ff0000"></div>
<div style="position:absolute;left:1360px;top:208px;width:72px;height:6px;background:#ff0000"></div>
<div style="position:absolute;left:1360px;top:83px;width:6px;height:131px;background:#ff0000"></div>
<div style="position:absolute;left:1426px;top:83px;width:6px;height:131px;background:#ff0000"></div>
<div style="position:absolute;left:36px;top:289px;width:136px;height:6px;background:#ff0000"></div>
<div style="position:absolute;left:36px;top:996px;width:136px;height:6px;background:#ff0000"></div>
<div style="position:absolute;left:36px;top:289px;width:6px;height:713px;background:#ff0000"></div>
<div style="position:absolute;left:166px;top:289px;width:6px;height:713px;background:#ff0000"></div>
<div style="position:absolute;left:1974px;top:285px;width:26px;height:717px;background:#e6e6e6"></div>
<div style="position:absolute;left:1977px;top:298px;width:20px;height:20px;background:#fff;border:1px solid #b4b4b4;box-sizing:border-box"></div>
<div style="position:absolute;left:1977px;top:318px;width:20px;height:638px;background:#fff;border:1px solid #b4b4b4;box-sizing:border-box"></div>
<div style="position:absolute;left:1977px;top:956px;width:20px;height:28px;background:#dadada"></div>
<div style="position:absolute;left:1977px;top:984px;width:20px;height:19px;background:#fff;border:1px solid #b4b4b4;box-sizing:border-box"></div>
<div style="position:absolute;left:0px;top:1003px;width:2000px;height:30px;background:#e6e6e6"></div>
<div style="position:absolute;left:108px;top:1003px;width:230px;height:26px;background:#fff"></div>
<div style="position:absolute;left:108px;top:1027px;width:230px;height:3px;background:#217346"></div>
<div class="t" style="left:120px;top:1004.81px;font-size:16.760px;line-height:16.760px;color:#217346;font-weight:bold;transform:scaleX(0.9872);transform-origin:0 14.19px;">Export_CSV_Rechnungen</div>
<div style="position:absolute;left:1216px;top:1008px;width:21px;height:19px;background:#fff;border:1px solid #b4b4b4;box-sizing:border-box"></div>
<div style="position:absolute;left:1236px;top:1008px;width:670px;height:19px;background:#fff;border:1px solid #b4b4b4;box-sizing:border-box"></div>
<div style="position:absolute;left:1906px;top:1008px;width:48px;height:19px;background:#dadada"></div>
<div style="position:absolute;left:1954px;top:1008px;width:20px;height:19px;background:#fff;border:1px solid #b4b4b4;box-sizing:border-box"></div>
<div style="position:absolute;left:0px;top:1032px;width:2000px;height:1px;background:#d0d0d0"></div>
<div style="position:absolute;left:0px;top:1033px;width:2000px;height:42px;background:#f3f2f1"></div>
<div style="position:absolute;left:1609px;top:1033px;width:54px;height:41px;background:#c8c6c4"></div>
<div class="t" style="left:1527px;top:1046.94px;font-size:14.246px;line-height:14.246px;color:#444;transform:scaleX(0.9092);transform-origin:0 12.06px;">Anzahl: 7</div>
<div class="t" style="left:1953.3px;top:1047.59px;font-size:13.128px;line-height:13.128px;color:#666;transform:scaleX(0.9322);transform-origin:0 11.11px;">100%</div>
<div style="position:absolute;left:1789px;top:1053px;width:130px;height:1px;background:#a0a0a0"></div>
<div style="position:absolute;left:1851px;top:1046px;width:6px;height:15px;background:#777"></div>
<div style="position:absolute;left:0px;top:1074px;width:62px;height:1px;background:#333"></div>
<div style="position:absolute;left:510px;top:1074px;width:583px;height:1px;background:#333"></div>
<div style="position:absolute;left:1157px;top:1074px;width:843px;height:1px;background:#333"></div>
<svg style="position:absolute;left:1300px;top:1px" width="700" height="45" viewBox="0 0 700 45"><ellipse cx="120" cy="24" rx="48" ry="32" fill="#1f6a40" opacity="0.55"/><rect x="170" y="0" width="50" height="45" fill="#1f6a40" opacity="0.6"/><rect x="469" y="0" width="60" height="45" fill="#1f6a40" opacity="0.6"/><ellipse cx="640" cy="40" rx="40" ry="20" fill="#1f6a40" opacity="0.5"/><ellipse cx="420" cy="5" rx="40" ry="12" fill="#1f6a40" opacity="0.4"/></svg>
<div style="position:absolute;left:1520px;top:0px;width:249px;height:46px;background:#e4e4e4"></div>
<div style="position:absolute;left:1522px;top:2px;width:245px;height:42px;background:#dcdfdc"></div>
<svg style="position:absolute;left:1575px;top:10px" width="25" height="25" viewBox="0 0 25 25"><path d="M12.5 2.5L22.5 22H2.5Z" fill="#e6dfd4"/><path d="M12.5 9V16M12.5 18.5V20" stroke="#dcdcd6" stroke-width="1.5"/></svg>
<div class="t" style="left:1611px;top:15.64px;font-size:15.782px;line-height:15.782px;color:#e7e9e7;transform:scaleX(0.9264);transform-origin:0 13.36px;">Barbara Fuisz</div>
<svg style="position:absolute;left:1715px;top:8px" width="30" height="30" viewBox="0 0 30 30"><circle cx="15" cy="14.5" r="14" fill="#e1e2e1"/></svg>
<div class="t" style="left:1724px;top:17.36px;font-size:12.570px;line-height:12.570px;color:#e8e9e8;transform:scaleX(0.8094);transform-origin:0 10.64px;">BF</div>
<svg style="position:absolute;left:200px;top:9px" width="53" height="25" viewBox="0 0 53 25"><rect x="2.6" y="2.8" width="48.2" height="19.6" rx="9.8" fill="none" stroke="#ffffff" stroke-width="1.3" opacity="0.9"/><circle cx="12.5" cy="12.8" r="4.8" fill="#ffffff"/></svg>
<svg style="position:absolute;left:280px;top:11px" width="26" height="26" viewBox="0 0 26 26"><path d="M2.6 2.8H22.5V22.5H5.8L2.6 19.3Z" fill="none" stroke="#ffffff" stroke-width="1.3"/><rect x="6.8" y="2.8" width="11.8" height="7.6" fill="none" stroke="#ffffff" stroke-width="1.3"/><rect x="8.2" y="15.6" width="9.3" height="6.9" fill="none" stroke="#ffffff" stroke-width="1.3"/></svg>
<svg style="position:absolute;left:343px;top:11px" width="24" height="26" viewBox="0 0 24 26"><path d="M2.6 2.6V11.2H11.2" fill="none" stroke="#8fc0a3" stroke-width="1.3"/><path d="M2.8 11Q8 4.5 13.5 3.8Q20.5 3.5 20.6 10.5Q20.5 13.5 17.5 16.5L9.5 23.5" fill="none" stroke="#8fc0a3" stroke-width="1.3"/></svg>
<svg style="position:absolute;left:403px;top:11px" width="24" height="26" viewBox="0 0 24 26"><g transform="translate(24 0) scale(-1 1)"><path d="M2.6 2.6V11.2H11.2" fill="none" stroke="#8fc0a3" stroke-width="1.3"/><path d="M2.8 11Q8 4.5 13.5 3.8Q20.5 3.5 20.6 10.5Q20.5 13.5 17.5 16.5L9.5 23.5" fill="none" stroke="#8fc0a3" stroke-width="1.3"/></g></svg>
<svg style="position:absolute;left:461px;top:10px" width="24" height="26" viewBox="0 0 24 26"><path d="M6.5 12.5A5 5 0 1 1 14.5 12" fill="none" stroke="#ffffff" stroke-width="1.3"/><path d="M9.3 17V7.5Q9.3 6 10.6 6Q12 6 12 7.5V13.5M12 12.5Q12 11.3 13.3 11.3Q14.5 11.3 14.5 12.5V14M14.5 13Q14.5 12 15.7 12Q17 12 17 13V14.5M17 14Q17 13 18 13Q19.2 13 19.2 14.5V19Q19 23.5 15 23.5H12.5Q10.5 23.5 8.5 21L5.5 17.5Q5 16 6.5 15.8L9.3 17.5" fill="none" stroke="#ffffff" stroke-width="1.3" stroke-linejoin="round"/></svg>
<svg style="position:absolute;left:490px;top:19px" width="10" height="6" viewBox="0 0 10 6"><path d="M1.5 1.5H8.5L5 5Z" fill="#ffffff"/></svg>
<svg style="position:absolute;left:527px;top:18px" width="10" height="11" viewBox="0 0 10 11"><path d="M2 2H8" stroke="#ffffff" stroke-width="1.2"/><path d="M1.5 4.5H8.5L5 8.5Z" fill="#ffffff"/></svg>
<svg style="position:absolute;left:1781px;top:14px" width="20" height="17" viewBox="0 0 20 17"><rect x="2.5" y="2.5" width="15" height="12" fill="none" stroke="#ffffff" stroke-width="1.1"/><path d="M2.5 5H17.5M10 14.5V7.5M7.5 10L10 7.5L12.5 10" fill="none" stroke="#ffffff" stroke-width="1.1"/></svg>
<div style="position:absolute;left:1845px;top:22px;width:12px;height:1px;background:#fff"></div>
<svg style="position:absolute;left:1902px;top:14px" width="18" height="17" viewBox="0 0 18 17"><rect x="2.5" y="5.5" width="10" height="10" fill="none" stroke="#ffffff" stroke-width="1.1"/><path d="M5 5.5V3H15V13H12.5" fill="none" stroke="#ffffff" stroke-width="1.1"/></svg>
<svg style="position:absolute;left:1961px;top:14px" width="18" height="18" viewBox="0 0 18 18"><path d="M2.5 2.5L15 15M15 2.5L2.5 15" stroke="#ffffff" stroke-width="1.1"/></svg>
<svg style="position:absolute;left:120px;top:263px" width="11" height="8" viewBox="0 0 11 8"><path d="M1.8 1.8H9.1L5.45 6Z" fill="#666"/></svg>
<div style="position:absolute;left:156px;top:259px;width:3px;height:2.5px;background:#b8b8b8"></div>
<div style="position:absolute;left:156px;top:264.5px;width:3px;height:2.5px;background:#b8b8b8"></div>
<div style="position:absolute;left:156px;top:270px;width:3px;height:2.5px;background:#b8b8b8"></div>
<svg style="position:absolute;left:190px;top:257px" width="22" height="20" viewBox="0 0 22 20"><path d="M3.5 3.5L18 16.5M18 3.5L3.5 16.5" stroke="#c4c4c4" stroke-width="2"/></svg>
<svg style="position:absolute;left:237px;top:257px" width="24" height="20" viewBox="0 0 24 20"><path d="M3.5 11L8.5 16.5L19.5 4.5" fill="none" stroke="#c8c8c8" stroke-width="2.6"/></svg>
<div class="t" style="left:285px;top:252px;font-family:'Liberation Serif',serif;font-style:italic;font-size:21px;line-height:24px;color:#555;letter-spacing:-1.5px">fx</div>
<svg style="position:absolute;left:1974px;top:262px" width="16" height="10" viewBox="0 0 16 10"><path d="M3 2.5L8 7L13 2.5" fill="none" stroke="#555" stroke-width="1.5"/></svg>
<svg style="position:absolute;left:27px;top:1011px" width="10" height="13" viewBox="0 0 10 13"><path d="M8 1.5V11.5L2 6.5Z" fill="#c4c4c4"/></svg>
<svg style="position:absolute;left:57px;top:1011px" width="10" height="13" viewBox="0 0 10 13"><path d="M2 1.5V11.5L8 6.5Z" fill="#c4c4c4"/></svg>
<svg style="position:absolute;left:370px;top:1006px" width="25" height="25" viewBox="0 0 25 25"><circle cx="12.25" cy="11.75" r="10" fill="none" stroke="#7a7a7a" stroke-width="1.3"/><path d="M7.5 11.75H17M12.25 7V16.5" stroke="#666" stroke-width="1.5"/></svg>
<div style="position:absolute;left:1197px;top:1011px;width:3px;height:3px;background:#b4b4b4"></div>
<div style="position:absolute;left:1197px;top:1015.5px;width:3px;height:3px;background:#b4b4b4"></div>
<div style="position:absolute;left:1197px;top:1020px;width:3px;height:3px;background:#b4b4b4"></div>
<svg style="position:absolute;left:1216px;top:1008px" width="21" height="19" viewBox="0 0 21 19"><path d="M12.5 5V14L7 9.5Z" fill="#666"/></svg>
<svg style="position:absolute;left:1954px;top:1008px" width="20" height="19" viewBox="0 0 20 19"><path d="M8 5V14L13.5 9.5Z" fill="#666"/></svg>
<svg style="position:absolute;left:1977px;top:298px" width="20" height="20" viewBox="0 0 20 20"><path d="M5 12.5H15L10 8Z" fill="#666"/></svg>
<svg style="position:absolute;left:1977px;top:984px" width="20" height="19" viewBox="0 0 20 19"><path d="M5 7H15L10 11.5Z" fill="#666"/></svg>
<svg style="position:absolute;left:12px;top:1040px" width="26" height="26" viewBox="0 0 26 26"><rect x="5.5" y="6.5" width="17" height="17" fill="#fff" stroke="#666" stroke-width="1.4"/><rect x="9.5" y="4.5" width="13.5" height="3.6" fill="#666"/><circle cx="7.2" cy="6.4" r="4.6" fill="#555"/><g fill="#888"><rect x="8" y="12" width="3" height="1.6"/><rect x="12.5" y="11" width="3" height="1.6"/><rect x="17" y="11" width="3" height="1.6"/><rect x="8" y="15.2" width="3" height="1.6"/><rect x="12.5" y="15.2" width="3" height="1.6"/><rect x="17" y="15.2" width="3" height="1.6"/><rect x="8" y="18.4" width="3" height="1.6"/><rect x="12.5" y="18.4" width="3" height="1.6"/><rect x="17" y="18.4" width="3" height="1.6"/></g></svg>
<svg style="position:absolute;left:1624px;top:1042px" width="25" height="25" viewBox="0 0 25 25"><rect x="2.6" y="2.6" width="19.5" height="19.5" fill="#cfcfcf" stroke="#6a6a6a" stroke-width="1.2"/><path d="M9.1 2.6V22M15.6 2.6V22M2.6 9.1H22M2.6 15.6H22" stroke="#6a6a6a" stroke-width="1"/></svg>
<svg style="position:absolute;left:1677px;top:1042px" width="25" height="25" viewBox="0 0 25 25"><rect x="2.6" y="2.6" width="19.4" height="19.4" fill="none" stroke="#6a6a6a" stroke-width="1.2"/><rect x="6.4" y="5.6" width="11.5" height="13.5" rx="1" fill="none" stroke="#6a6a6a" stroke-width="1.2"/><path d="M8.8 9.5H15.5M8.8 12.5H15.5M8.8 15.5H15.5" stroke="#6a6a6a" stroke-width="1.1"/></svg>
<svg style="position:absolute;left:1730px;top:1042px" width="25" height="25" viewBox="0 0 25 25"><rect x="2.6" y="2.6" width="19.4" height="18.5" fill="none" stroke="#6a6a6a" stroke-width="1.2"/><path d="M2.6 13H15.5V2.6M9.5 2.6V13" fill="none" stroke="#6a6a6a" stroke-width="1.1"/></svg>
<div style="position:absolute;left:1774px;top:1052px;width:10px;height:2px;background:#666"></div>
<svg style="position:absolute;left:1920px;top:1046px" width="16" height="16" viewBox="0 0 16 16"><path d="M3 7.5H13M8 2.5V12.5" stroke="#555" stroke-width="1.6"/></svg>
</body></html>
